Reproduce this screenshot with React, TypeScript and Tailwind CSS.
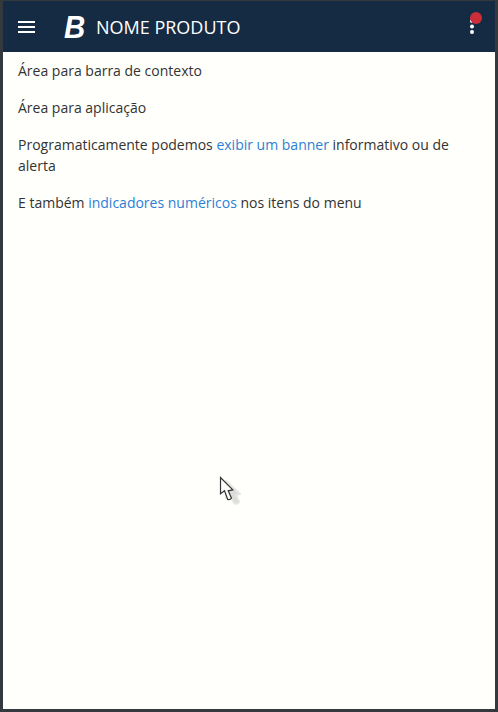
function Header() {
  return (
    <header className="flex h-[51px] shrink-0 items-center bg-[#152b43] text-white">
      <button aria-label="Menu" className="ml-[15px] flex h-[18px] w-[18px] items-center justify-center">
        <svg viewBox="0 0 18 12" className="h-3 w-[18px]" fill="currentColor">
          <path d="M0 0h17v2H0zM0 5h17v2H0zM0 10h17v2H0z" />
        </svg>
      </button>
      <span className="ml-[28px] w-[23px] origin-left scale-x-95 pt-[3px] font-['Liberation_Sans',Arial,sans-serif] text-[31px] leading-[48px] font-bold italic">
        B
      </span>
      <h1 className="ml-[9px] text-[18px] leading-[50px]">NOME PRODUTO</h1>
      <button aria-label="Mais opções" className="relative mr-[20px] ml-auto flex h-6 w-[6px] items-center justify-center">
        <svg viewBox="0 0 6 16" className="mr-px mb-0.5 h-4 w-[6px] shrink-0" fill="currentColor">
          <circle cx="3" cy="3" r="2" />
          <circle cx="3" cy="8.5" r="2" />
          <circle cx="3" cy="14" r="2" />
        </svg>
        <span className="absolute -top-[3px] left-[0.5px] h-3 w-3 rounded-full bg-[#cb2e38]" />
      </button>
    </header>
  );
}

function Pointer() {
  return (
    <svg viewBox="0 0 26 32" className="absolute top-[475px] left-[216px] h-8 w-[26px]">
      <path
        d="M7 5v17l4-3 4 8q3 2 5-1l-3-7 4-1z"
        fill="#dcdcda"
        stroke="#e5e5e2"
        strokeWidth="2"
        strokeLinejoin="round"
      />
      <path d="M1.5 1.5v16.2l4-2.9 3.2 8.7q2.2.6 3.8-1.3l-3.3-7.4 4.6-1z" fill="#fcfcf9" stroke="#333638" strokeWidth="1.2" />
    </svg>
  );
}

export default function App() {
  return (
    <div className="relative flex h-[712px] w-[498px] flex-col border-x-[3px] border-t border-b-[3px] border-[#33393c] bg-[#fffffb] font-['Open_Sans',sans-serif]">
      <Header />
      <main className="flex flex-col gap-4 px-[15px] pt-2 text-[14px] leading-[21px] text-[#333333]">
        <p>Área para barra de contexto</p>
        <p>Área para aplicação</p>
        <p>
          Programaticamente podemos <a className="text-[#2b80d5]">exibir um banner</a> informativo ou de alerta
        </p>
        <p>
          E também <a className="text-[#2b80d5]">indicadores numéricos</a> nos itens do menu
        </p>
      </main>
      <Pointer />
    </div>
  );
}
